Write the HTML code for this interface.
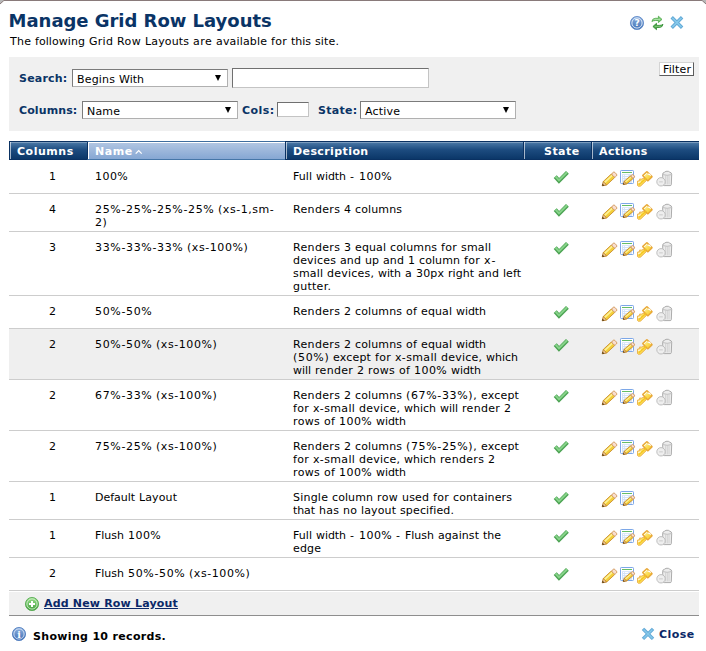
<!DOCTYPE html>
<html><head><meta charset="utf-8"><title>Manage Grid Row Layouts</title>
<style>
html,body{margin:0;padding:0}
body{width:706px;height:651px;background:#b7b7b7;position:relative;overflow:hidden;font-family:"DejaVu Sans","Liberation Sans",sans-serif;font-size:11px;color:#000}
#dlg{position:absolute;left:0;top:0;width:706px;height:660px}
h1{position:absolute;left:8.6px;top:10px;margin:0;font-size:18px;line-height:22px;font-weight:bold;color:#0a3466;white-space:nowrap;letter-spacing:-0.03px}
.t{position:absolute;white-space:nowrap;line-height:13px;height:13px}
.wd{display:inline-block;text-align:left}.r{word-spacing:0.503px}.b{font-weight:bold}.n{color:#0a3466}.k{color:#0b2868}.w{color:#fff}.u{text-decoration:underline}
.sel{position:absolute;box-sizing:border-box;height:18px;background:#fff;border:1px solid #b0b0b0;border-top-color:#7b7b7b;border-left-color:#7b7b7b}
.sel i{position:absolute;right:6px;top:5px;width:0;height:0;border-left:3.5px solid transparent;border-right:3.5px solid transparent;border-top:6px solid #000}
.inp{position:absolute;box-sizing:border-box;background:#fff;border:1px solid #c4c4c4;border-top-color:#707070;border-left-color:#707070}
#panel{position:absolute;left:9px;top:57px;width:690px;height:74px;background:#f0f0f0}
.th{position:absolute;top:141px;height:19px;box-sizing:border-box;border:1px solid #0a3162;border-right:0;background:linear-gradient(#4c7aa8,#1d4c80 45%,#0b3768);box-shadow:inset 1px 0 0 rgba(255,255,255,.62),inset 0 1px 0 rgba(255,255,255,.28)}
.th.s{background:linear-gradient(#b3c7e3,#86a7d3);border-color:#3f6d9e #0a3162 #4676a8 #0a3162;box-shadow:inset 1px 1px 0 #fff}
.ln{position:absolute;left:9px;width:690px;height:1px;background:#cdcdcd}
.ic{position:absolute;overflow:visible}
</style></head><body>
<div id="dlg">
<svg style="position:absolute;left:0;top:0" width="706" height="651" viewBox="0 0 706 651"><path d="M-1 4.9 L3.9 0.5 L702.1 0.5 L707 4.9 L707 660 L-1 660 Z" fill="#fff" stroke="#897a7a" stroke-width="1"/></svg>
<h1>Manage Grid Row Layouts</h1>
<div id="panel"></div>
<div class="sel" style="left:72px;top:69px;width:156px"><i></i></div>
<div class="inp" style="left:232px;top:68px;width:197px;height:20px"></div>
<div class="inp" style="left:659px;top:62px;width:35px;height:14px;border-color:#d4d4d4 #5c5c5c #5c5c5c #d4d4d4;background:#fff"></div>
<div class="sel" style="left:82px;top:101px;width:156px"><i></i></div>
<div class="inp" style="left:277px;top:102px;width:32px;height:15px"></div>
<div class="sel" style="left:360px;top:101px;width:156px"><i></i></div>
<div class="th" style="left:9px;width:78px"></div>
<div class="th s" style="left:87px;width:198px"></div>
<div class="th" style="left:285px;width:238px"></div>
<div class="th" style="left:523px;width:68px"></div>
<div class="th" style="left:591px;width:108px"></div>

<div class="ln" style="top:193px"></div>
<div class="ln" style="top:231px"></div>
<div class="ln" style="top:295px"></div>
<div class="ln" style="top:328px"></div>
<div style="position:absolute;left:9px;top:329px;width:690px;height:50px;background:#efefef"></div>
<div class="ln" style="top:379px"></div>
<div class="ln" style="top:430px"></div>
<div class="ln" style="top:481px"></div>
<div class="ln" style="top:519px"></div>
<div class="ln" style="top:557px"></div>
<div class="ln" style="top:590px"></div>
<div style="position:absolute;left:9px;top:592px;width:690px;height:23px;background:#f0f0f0;border-bottom:1px solid #8e8e8e"></div>
<svg style="position:absolute;left:0;top:0" width="706" height="651" viewBox="0 0 706 651"><defs><linearGradient id="gb" x1="0" y1="0" x2="0" y2="1"><stop offset="0" stop-color="#8fb2e0"/><stop offset="1" stop-color="#3f6fb4"/></linearGradient><linearGradient id="gg" x1="0" y1="0" x2="0" y2="1"><stop offset="0" stop-color="#9adf8c"/><stop offset="1" stop-color="#3e9e3a"/></linearGradient><linearGradient id="gk" x1="0" y1="0" x2="1" y2="1"><stop offset="0" stop-color="#fff7c4"/><stop offset=".5" stop-color="#fbde5a"/><stop offset="1" stop-color="#f5c828"/></linearGradient><g id="chk"><path d="M555.2 176.6 L559 180.9 L567.4 172.4" fill="none" stroke="#3c9a43" stroke-width="4" stroke-opacity=".92"/><path d="M555.5 176.5 L559 180.3 L567.1 172.3" fill="none" stroke="#86d389" stroke-width="1.9"/></g><g id="pen"><g transform="translate(602.2 185.8) rotate(-42.8)"><path d="M0 0 L3.86 -2.45 L3.86 2.45 Z" fill="#f3cfa4" stroke="#b47a26" stroke-width=".9" stroke-linejoin="round"/><path d="M0 0 L1.74 -1.10 L1.74 1.10 Z" fill="#3a280c"/><rect x="3.86" y="-2.45" width="10.86" height="4.90" fill="#f3cf3a" stroke="#c98b28" stroke-width=".9" stroke-opacity=".9"/><rect x="4.16" y="-1.65" width="10.26" height="1.65" fill="#fdf196"/><rect x="14.72" y="-2.45" width="3.68" height="4.90" rx="1.3" fill="#f8ded0" stroke="#d29a5e" stroke-width=".9"/></g></g><g id="grd"><rect x="620.5" y="170.5" width="13" height="13" rx=".8" fill="#fff" stroke="#7ca7e8" stroke-width="1"/><rect x="622" y="172" width="10" height="1" fill="#67bd66"/><rect x="622" y="174.2" width="10" height="8.6" fill="#d3e2f8"/><path d="M623 175.5h1.2M623 177.6h1.2M623 179.7h1.2M625 175.5h3.4M625 177.6h3.4M625 179.7h3.4" stroke="#fff" stroke-width="1"/><g transform="translate(623.2 184.5) rotate(-40.1)"><path d="M0 0 L2.94 -1.85 L2.94 1.85 Z" fill="#f3cfa4" stroke="#b47a26" stroke-width=".9" stroke-linejoin="round"/><path d="M0 0 L1.32 -0.83 L1.32 0.83 Z" fill="#3a280c"/><rect x="2.94" y="-1.85" width="8.25" height="3.70" fill="#f3cf3a" stroke="#c98b28" stroke-width=".9" stroke-opacity=".9"/><rect x="3.24" y="-1.05" width="7.65" height="1.05" fill="#fdf196"/><rect x="11.19" y="-1.85" width="2.80" height="3.70" rx="1.3" fill="#f8ded0" stroke="#d29a5e" stroke-width=".9"/></g></g><g id="key"><path d="M644 178 L641.7 179.1 L639.5 179.1 L640 180.7 L637.6 181 L637.5 185.5 L638.4 186.3 L640.6 186.1 L646.3 180.6 Z" fill="url(#gk)" stroke="#e8a83a" stroke-width=".85" stroke-linejoin="round"/><path d="M643 175.5 L646.9 172 L651.8 176.7 L647.8 180.6 Z" fill="url(#gk)" stroke="#e8a83a" stroke-width="1.9" stroke-linejoin="round"/><path d="M643.6 175.5 L646.9 172.6 L651.1 176.7 L647.8 179.9 Z" fill="url(#gk)"/><path d="M648 174.2 Q649.4 174 650.4 175.3" stroke="#fff" stroke-width="1.1" stroke-linecap="round" fill="none"/><path d="M639.2 184.3 L645.8 178.4" stroke="#f5c41e" stroke-width="1.3" stroke-linecap="round"/><path d="M638.5 182.4 L640.4 181.9 M644.4 175.6 L646.6 173.6" stroke="#fffbe6" stroke-width="1" stroke-linecap="round"/></g><g id="del"><path d="M662.6 174.4 Q662.6 172.6 664.6 172.2 L666 171.3 L668.4 171.3 L669.8 172.2 Q671.7 172.6 671.7 174.4 L671.3 184.6 Q671.2 185.6 670.2 185.6 L664.2 185.6 Q663.2 185.6 663.1 184.6 Z" fill="#ececec" stroke="#a4a4a4" stroke-width=".9"/><path d="M665.6 175.6 V184.4 M667.3 175.6 V184.4 M669 175.6 V184.4" stroke="#cfcfcf" stroke-width=".9"/><path d="M662.8 174.6 Q667.2 176 671.5 174.6" stroke="#b9b9b9" fill="none" stroke-width=".9"/><circle cx="661" cy="181.8" r="4.2" fill="#eeeeee" stroke="#b8b8b8" stroke-width=".9"/><rect x="659.2" y="181.3" width="3.6" height="1.1" fill="#cdcdcd"/></g><g id="xx"><path d="M2.5 2.5 L10.5 10.5 M10.5 2.5 L2.5 10.5" stroke="#4f9fd2" stroke-width="3.4" stroke-linecap="square" stroke-opacity=".9"/><path d="M2.4 2.4 L10.6 10.6 M10.6 2.4 L2.4 10.6" stroke="#86c8ea" stroke-width="1.5" stroke-linecap="square"/></g></defs>
<g><use href="#chk"/><use href="#pen"/><use href="#grd"/><use href="#key"/><use href="#del"/></g>
<g transform="translate(0 33)"><use href="#chk"/><use href="#pen"/><use href="#grd"/><use href="#key"/><use href="#del"/></g>
<g transform="translate(0 71)"><use href="#chk"/><use href="#pen"/><use href="#grd"/><use href="#key"/><use href="#del"/></g>
<g transform="translate(0 135)"><use href="#chk"/><use href="#pen"/><use href="#grd"/><use href="#key"/><use href="#del"/></g>
<g transform="translate(0 168)"><use href="#chk"/><use href="#pen"/><use href="#grd"/><use href="#key"/><use href="#del"/></g>
<g transform="translate(0 219)"><use href="#chk"/><use href="#pen"/><use href="#grd"/><use href="#key"/><use href="#del"/></g>
<g transform="translate(0 270)"><use href="#chk"/><use href="#pen"/><use href="#grd"/><use href="#key"/><use href="#del"/></g>
<g transform="translate(0 321)"><use href="#chk"/><use href="#pen"/><use href="#grd"/></g>
<g transform="translate(0 359)"><use href="#chk"/><use href="#pen"/><use href="#grd"/><use href="#key"/><use href="#del"/></g>
<g transform="translate(0 397)"><use href="#chk"/><use href="#pen"/><use href="#grd"/><use href="#key"/><use href="#del"/></g>
<path d="M135.7 153.6 L138.7 150.6 L141.7 153.6" fill="none" stroke="#fff" stroke-width="1.3"/>
<g transform="translate(630 16)"><circle cx="7" cy="7" r="6.6" fill="url(#gb)" stroke="#5b87c6" stroke-width=".8"/><circle cx="7" cy="7" r="5.1" fill="none" stroke="#e6effa" stroke-width=".9"/><text x="7" y="10.4" text-anchor="middle" font-family="DejaVu Sans, sans-serif" font-weight="bold" font-size="9" fill="#fff">?</text></g>
<path d="M651.9 21.5 Q652.2 18.5 655.5 18.3 L658.4 18.3 L658.4 16.2 L662 19.4 L658.4 22.6 L658.4 20.5 L655.6 20.5 Q653.2 20.5 651.9 21.5 Z" fill="#7fce78" stroke="#4da649" stroke-width=".8" stroke-linejoin="round"/><path d="M653.6 19.6 Q654.6 19.3 656 19.4 L660 19.4" stroke="#c4ecc0" stroke-width=".7" fill="none"/><path d="M663 24.3 Q662.7 27.3 659.4 27.5 L656.5 27.5 L656.5 29.7 L652.9 26.5 L656.5 23.3 L656.5 25.4 L659.3 25.4 Q661.7 25.4 663 24.3 Z" fill="#4faa4b" stroke="#2e8a30" stroke-width=".8" stroke-linejoin="round"/><path d="M654.8 26.5 L659 26.5 Q660.6 26.5 661.4 26" stroke="#8ed18a" stroke-width=".7" fill="none"/>
<use href="#xx" transform="translate(670.4 16)"/>
<use href="#xx" transform="translate(641.7 627.6) scale(.97)"/>
<g transform="translate(12 627)"><circle cx="7" cy="7" r="6.6" fill="url(#gb)" stroke="#4a78bc" stroke-width=".8"/><circle cx="7" cy="7" r="5.1" fill="none" stroke="#dfe9f7" stroke-width=".8"/><text x="7" y="10.6" text-anchor="middle" font-family="DejaVu Serif, serif" font-weight="bold" font-size="9.5" fill="#fff">i</text></g>
<g transform="translate(25 597)"><circle cx="7" cy="7" r="6.6" fill="url(#gg)" stroke="#4fa64a" stroke-width=".8"/><circle cx="7" cy="7" r="5.1" fill="none" stroke="#d9f2d4" stroke-width=".8"/><path d="M7 4 V10 M4 7 H10" stroke="#fff" stroke-width="2"/></g>
</svg>
<div class="t r " id="t1" style="left:10px;top:35px"><span class="wd" style="width:21px;letter-spacing:0.226px">The</span> <span class="wd" style="width:50px;letter-spacing:0.065px">following</span> <span class="wd" style="width:24px;letter-spacing:0.269px">Grid</span> <span class="wd" style="width:24px;letter-spacing:0.469px">Row</span> <span class="wd" style="width:44px;letter-spacing:0.137px">Layouts</span> <span class="wd" style="width:19px;letter-spacing:0.505px">are</span> <span class="wd" style="width:51px;letter-spacing:0.161px">available</span> <span class="wd" style="width:16px;letter-spacing:0.365px">for</span> <span class="wd" style="width:20px;letter-spacing:-0.021px">this</span> <span class="wd" style="width:24px;letter-spacing:0.144px">site.</span></div>
<div class="t b n" id="t2" style="left:19px;top:72px;letter-spacing:0.203px">Search:</div>
<div class="t b n" id="t3" style="left:19px;top:104px;letter-spacing:0.102px">Columns:</div>
<div class="t b n" id="t4" style="left:242px;top:104px;letter-spacing:0.460px">Cols:</div>
<div class="t b n" id="t5" style="left:318px;top:104px;letter-spacing:0.293px">State:</div>
<div class="t r " id="t6" style="left:77px;top:73px"><span class="wd" style="width:38px;letter-spacing:0.175px">Begins</span> <span class="wd" style="width:25px;letter-spacing:0.007px">With</span></div>
<div class="t r " id="t7" style="left:87px;top:105px"><span class="wd" style="width:33px;letter-spacing:0.161px">Name</span></div>
<div class="t r " id="t8" style="left:365px;top:105px"><span class="wd" style="width:35px;letter-spacing:0.180px">Active</span></div>
<div class="t r " id="t9" style="left:663px;top:63px"><span class="wd" style="width:28px;letter-spacing:0.140px">Filter</span></div>
<div class="t b w" id="t10" style="left:17px;top:145px;letter-spacing:0.520px">Columns</div>
<div class="t b w" id="t11" style="left:95px;top:145px;letter-spacing:0.546px">Name</div>
<div class="t b w" id="t12" style="left:293px;top:145px;letter-spacing:0.404px">Description</div>
<div class="t b w" id="t13" style="left:544px;top:145px;letter-spacing:0.468px">State</div>
<div class="t b w" id="t14" style="left:599px;top:145px;letter-spacing:0.367px">Actions</div>
<div class="t r " id="t15" style="left:49px;top:170px"><span class="wd" style="width:7px">1</span></div>
<div class="t r " id="t16" style="left:95px;top:170px"><span class="wd" style="width:33px;letter-spacing:0.457px">100%</span></div>
<div class="t r " id="t17" style="left:293px;top:170px"><span class="wd" style="width:19px;letter-spacing:0.056px">Full</span> <span class="wd" style="width:30px;letter-spacing:-0.073px">width</span> <span class="wd" style="width:5px">-</span> <span class="wd" style="width:33px;letter-spacing:0.457px">100%</span></div>
<div class="t r " id="t18" style="left:49px;top:203px"><span class="wd" style="width:7px">4</span></div>
<div class="t r " id="t19" style="left:95px;top:203px"><span class="wd" style="width:119px;letter-spacing:0.646px">25%-25%-25%-25%</span> <span class="wd" style="width:56px;letter-spacing:0.546px">(xs-1,sm-</span></div>
<div class="t r " id="t20" style="left:95px;top:216px"><span class="wd" style="width:12px;letter-spacing:0.507px">2)</span></div>
<div class="t r " id="t21" style="left:293px;top:203px"><span class="wd" style="width:47px;letter-spacing:0.329px">Renders</span> <span class="wd" style="width:7px">4</span> <span class="wd" style="width:47px;letter-spacing:0.121px">columns</span></div>
<div class="t r " id="t22" style="left:49px;top:241px"><span class="wd" style="width:7px">3</span></div>
<div class="t r " id="t23" style="left:95px;top:241px"><span class="wd" style="width:88px;letter-spacing:0.646px">33%-33%-33%</span> <span class="wd" style="width:61px;letter-spacing:0.567px">(xs-100%)</span></div>
<div class="t r " id="t24" style="left:293px;top:241px"><span class="wd" style="width:47px;letter-spacing:0.329px">Renders</span> <span class="wd" style="width:7px">3</span> <span class="wd" style="width:31px;letter-spacing:0.109px">equal</span> <span class="wd" style="width:47px;letter-spacing:0.121px">columns</span> <span class="wd" style="width:16px;letter-spacing:0.365px">for</span> <span class="wd" style="width:30px;letter-spacing:0.159px">small</span></div>
<div class="t r " id="t25" style="left:293px;top:254px"><span class="wd" style="width:43px;letter-spacing:0.178px">devices</span> <span class="wd" style="width:21px;letter-spacing:0.127px">and</span> <span class="wd" style="width:14px;letter-spacing:0.033px">up</span> <span class="wd" style="width:21px;letter-spacing:0.127px">and</span> <span class="wd" style="width:7px">1</span> <span class="wd" style="width:41px;letter-spacing:0.094px">column</span> <span class="wd" style="width:16px;letter-spacing:0.365px">for</span> <span class="wd" style="width:12px;letter-spacing:1.086px">x-</span></div>
<div class="t r " id="t26" style="left:293px;top:267px"><span class="wd" style="width:30px;letter-spacing:0.159px">small</span> <span class="wd" style="width:47px;letter-spacing:0.222px">devices,</span> <span class="wd" style="width:23px;letter-spacing:-0.099px">with</span> <span class="wd" style="width:7px">a</span> <span class="wd" style="width:28px;letter-spacing:0.150px">30px</span> <span class="wd" style="width:26px;letter-spacing:0.035px">right</span> <span class="wd" style="width:21px;letter-spacing:0.127px">and</span> <span class="wd" style="width:18px;letter-spacing:0.054px">left</span></div>
<div class="t r " id="t27" style="left:293px;top:280px"><span class="wd" style="width:38px;letter-spacing:0.257px">gutter.</span></div>
<div class="t r " id="t28" style="left:49px;top:305px"><span class="wd" style="width:7px">2</span></div>
<div class="t r " id="t29" style="left:95px;top:305px"><span class="wd" style="width:57px;letter-spacing:0.646px">50%-50%</span></div>
<div class="t r " id="t30" style="left:293px;top:305px"><span class="wd" style="width:47px;letter-spacing:0.329px">Renders</span> <span class="wd" style="width:7px">2</span> <span class="wd" style="width:47px;letter-spacing:0.121px">columns</span> <span class="wd" style="width:11px;letter-spacing:0.284px">of</span> <span class="wd" style="width:31px;letter-spacing:0.109px">equal</span> <span class="wd" style="width:30px;letter-spacing:-0.073px">width</span></div>
<div class="t r " id="t31" style="left:49px;top:338px"><span class="wd" style="width:7px">2</span></div>
<div class="t r " id="t32" style="left:95px;top:338px"><span class="wd" style="width:57px;letter-spacing:0.646px">50%-50%</span> <span class="wd" style="width:61px;letter-spacing:0.567px">(xs-100%)</span></div>
<div class="t r " id="t33" style="left:293px;top:338px"><span class="wd" style="width:47px;letter-spacing:0.329px">Renders</span> <span class="wd" style="width:7px">2</span> <span class="wd" style="width:47px;letter-spacing:0.121px">columns</span> <span class="wd" style="width:11px;letter-spacing:0.284px">of</span> <span class="wd" style="width:31px;letter-spacing:0.109px">equal</span> <span class="wd" style="width:30px;letter-spacing:-0.073px">width</span></div>
<div class="t r " id="t34" style="left:293px;top:351px"><span class="wd" style="width:36px;letter-spacing:0.674px">(50%)</span> <span class="wd" style="width:38px;letter-spacing:0.185px">except</span> <span class="wd" style="width:16px;letter-spacing:0.365px">for</span> <span class="wd" style="width:42px;letter-spacing:0.347px">x-small</span> <span class="wd" style="width:41px;letter-spacing:0.214px">device,</span> <span class="wd" style="width:32px;letter-spacing:-0.010px">which</span></div>
<div class="t r " id="t35" style="left:293px;top:364px"><span class="wd" style="width:18px;letter-spacing:-0.049px">will</span> <span class="wd" style="width:38px;letter-spacing:0.316px">render</span> <span class="wd" style="width:7px">2</span> <span class="wd" style="width:27px;letter-spacing:0.371px">rows</span> <span class="wd" style="width:11px;letter-spacing:0.284px">of</span> <span class="wd" style="width:33px;letter-spacing:0.457px">100%</span> <span class="wd" style="width:30px;letter-spacing:-0.073px">width</span></div>
<div class="t r " id="t36" style="left:49px;top:389px"><span class="wd" style="width:7px">2</span></div>
<div class="t r " id="t37" style="left:95px;top:389px"><span class="wd" style="width:57px;letter-spacing:0.646px">67%-33%</span> <span class="wd" style="width:61px;letter-spacing:0.567px">(xs-100%)</span></div>
<div class="t r " id="t38" style="left:293px;top:389px"><span class="wd" style="width:47px;letter-spacing:0.329px">Renders</span> <span class="wd" style="width:7px">2</span> <span class="wd" style="width:47px;letter-spacing:0.121px">columns</span> <span class="wd" style="width:71px;letter-spacing:0.644px">(67%-33%),</span> <span class="wd" style="width:38px;letter-spacing:0.185px">except</span></div>
<div class="t r " id="t39" style="left:293px;top:402px"><span class="wd" style="width:16px;letter-spacing:0.365px">for</span> <span class="wd" style="width:42px;letter-spacing:0.347px">x-small</span> <span class="wd" style="width:41px;letter-spacing:0.214px">device,</span> <span class="wd" style="width:32px;letter-spacing:-0.010px">which</span> <span class="wd" style="width:18px;letter-spacing:-0.049px">will</span> <span class="wd" style="width:38px;letter-spacing:0.316px">render</span> <span class="wd" style="width:7px">2</span></div>
<div class="t r " id="t40" style="left:293px;top:415px"><span class="wd" style="width:27px;letter-spacing:0.371px">rows</span> <span class="wd" style="width:11px;letter-spacing:0.284px">of</span> <span class="wd" style="width:33px;letter-spacing:0.457px">100%</span> <span class="wd" style="width:30px;letter-spacing:-0.073px">width</span></div>
<div class="t r " id="t41" style="left:49px;top:440px"><span class="wd" style="width:7px">2</span></div>
<div class="t r " id="t42" style="left:95px;top:440px"><span class="wd" style="width:57px;letter-spacing:0.646px">75%-25%</span> <span class="wd" style="width:61px;letter-spacing:0.567px">(xs-100%)</span></div>
<div class="t r " id="t43" style="left:293px;top:440px"><span class="wd" style="width:47px;letter-spacing:0.329px">Renders</span> <span class="wd" style="width:7px">2</span> <span class="wd" style="width:47px;letter-spacing:0.121px">columns</span> <span class="wd" style="width:71px;letter-spacing:0.644px">(75%-25%),</span> <span class="wd" style="width:38px;letter-spacing:0.185px">except</span></div>
<div class="t r " id="t44" style="left:293px;top:453px"><span class="wd" style="width:16px;letter-spacing:0.365px">for</span> <span class="wd" style="width:42px;letter-spacing:0.347px">x-small</span> <span class="wd" style="width:41px;letter-spacing:0.214px">device,</span> <span class="wd" style="width:32px;letter-spacing:-0.010px">which</span> <span class="wd" style="width:44px;letter-spacing:0.309px">renders</span> <span class="wd" style="width:7px">2</span></div>
<div class="t r " id="t45" style="left:293px;top:466px"><span class="wd" style="width:27px;letter-spacing:0.371px">rows</span> <span class="wd" style="width:11px;letter-spacing:0.284px">of</span> <span class="wd" style="width:33px;letter-spacing:0.457px">100%</span> <span class="wd" style="width:30px;letter-spacing:-0.073px">width</span></div>
<div class="t r " id="t46" style="left:49px;top:491px"><span class="wd" style="width:7px">1</span></div>
<div class="t r " id="t47" style="left:95px;top:491px"><span class="wd" style="width:40px;letter-spacing:-0.030px">Default</span> <span class="wd" style="width:38px;letter-spacing:0.112px">Layout</span></div>
<div class="t r " id="t48" style="left:293px;top:491px"><span class="wd" style="width:35px;letter-spacing:0.219px">Single</span> <span class="wd" style="width:41px;letter-spacing:0.094px">column</span> <span class="wd" style="width:21px;letter-spacing:0.414px">row</span> <span class="wd" style="width:27px;letter-spacing:0.161px">used</span> <span class="wd" style="width:16px;letter-spacing:0.365px">for</span> <span class="wd" style="width:59px;letter-spacing:0.122px">containers</span></div>
<div class="t r " id="t49" style="left:293px;top:504px"><span class="wd" style="width:22px;letter-spacing:-0.100px">that</span> <span class="wd" style="width:20px;letter-spacing:0.232px">has</span> <span class="wd" style="width:14px;letter-spacing:0.213px">no</span> <span class="wd" style="width:35px;letter-spacing:0.126px">layout</span> <span class="wd" style="width:54px;letter-spacing:0.132px">specified.</span></div>
<div class="t r " id="t50" style="left:49px;top:529px"><span class="wd" style="width:7px">1</span></div>
<div class="t r " id="t51" style="left:95px;top:529px"><span class="wd" style="width:29px;letter-spacing:-0.013px">Flush</span> <span class="wd" style="width:33px;letter-spacing:0.457px">100%</span></div>
<div class="t r " id="t52" style="left:293px;top:529px"><span class="wd" style="width:19px;letter-spacing:0.056px">Full</span> <span class="wd" style="width:30px;letter-spacing:-0.073px">width</span> <span class="wd" style="width:5px">-</span> <span class="wd" style="width:33px;letter-spacing:0.457px">100%</span> <span class="wd" style="width:5px">-</span> <span class="wd" style="width:29px;letter-spacing:-0.013px">Flush</span> <span class="wd" style="width:41px;letter-spacing:0.073px">against</span> <span class="wd" style="width:18px;letter-spacing:-0.022px">the</span></div>
<div class="t r " id="t53" style="left:293px;top:542px"><span class="wd" style="width:28px;letter-spacing:0.147px">edge</span></div>
<div class="t r " id="t54" style="left:49px;top:567px"><span class="wd" style="width:7px">2</span></div>
<div class="t r " id="t55" style="left:95px;top:567px"><span class="wd" style="width:29px;letter-spacing:-0.013px">Flush</span> <span class="wd" style="width:57px;letter-spacing:0.646px">50%-50%</span> <span class="wd" style="width:61px;letter-spacing:0.567px">(xs-100%)</span></div>
<div class="t b k u" id="t56" style="left:44px;top:597px;letter-spacing:0.183px">Add New Row Layout</div>
<div class="t b" id="t57" style="left:33px;top:630px;letter-spacing:0.327px">Showing 10 records.</div>
<div class="t b k" id="t58" style="left:659px;top:628px;letter-spacing:0.445px">Close</div>
</div>
</body></html>
